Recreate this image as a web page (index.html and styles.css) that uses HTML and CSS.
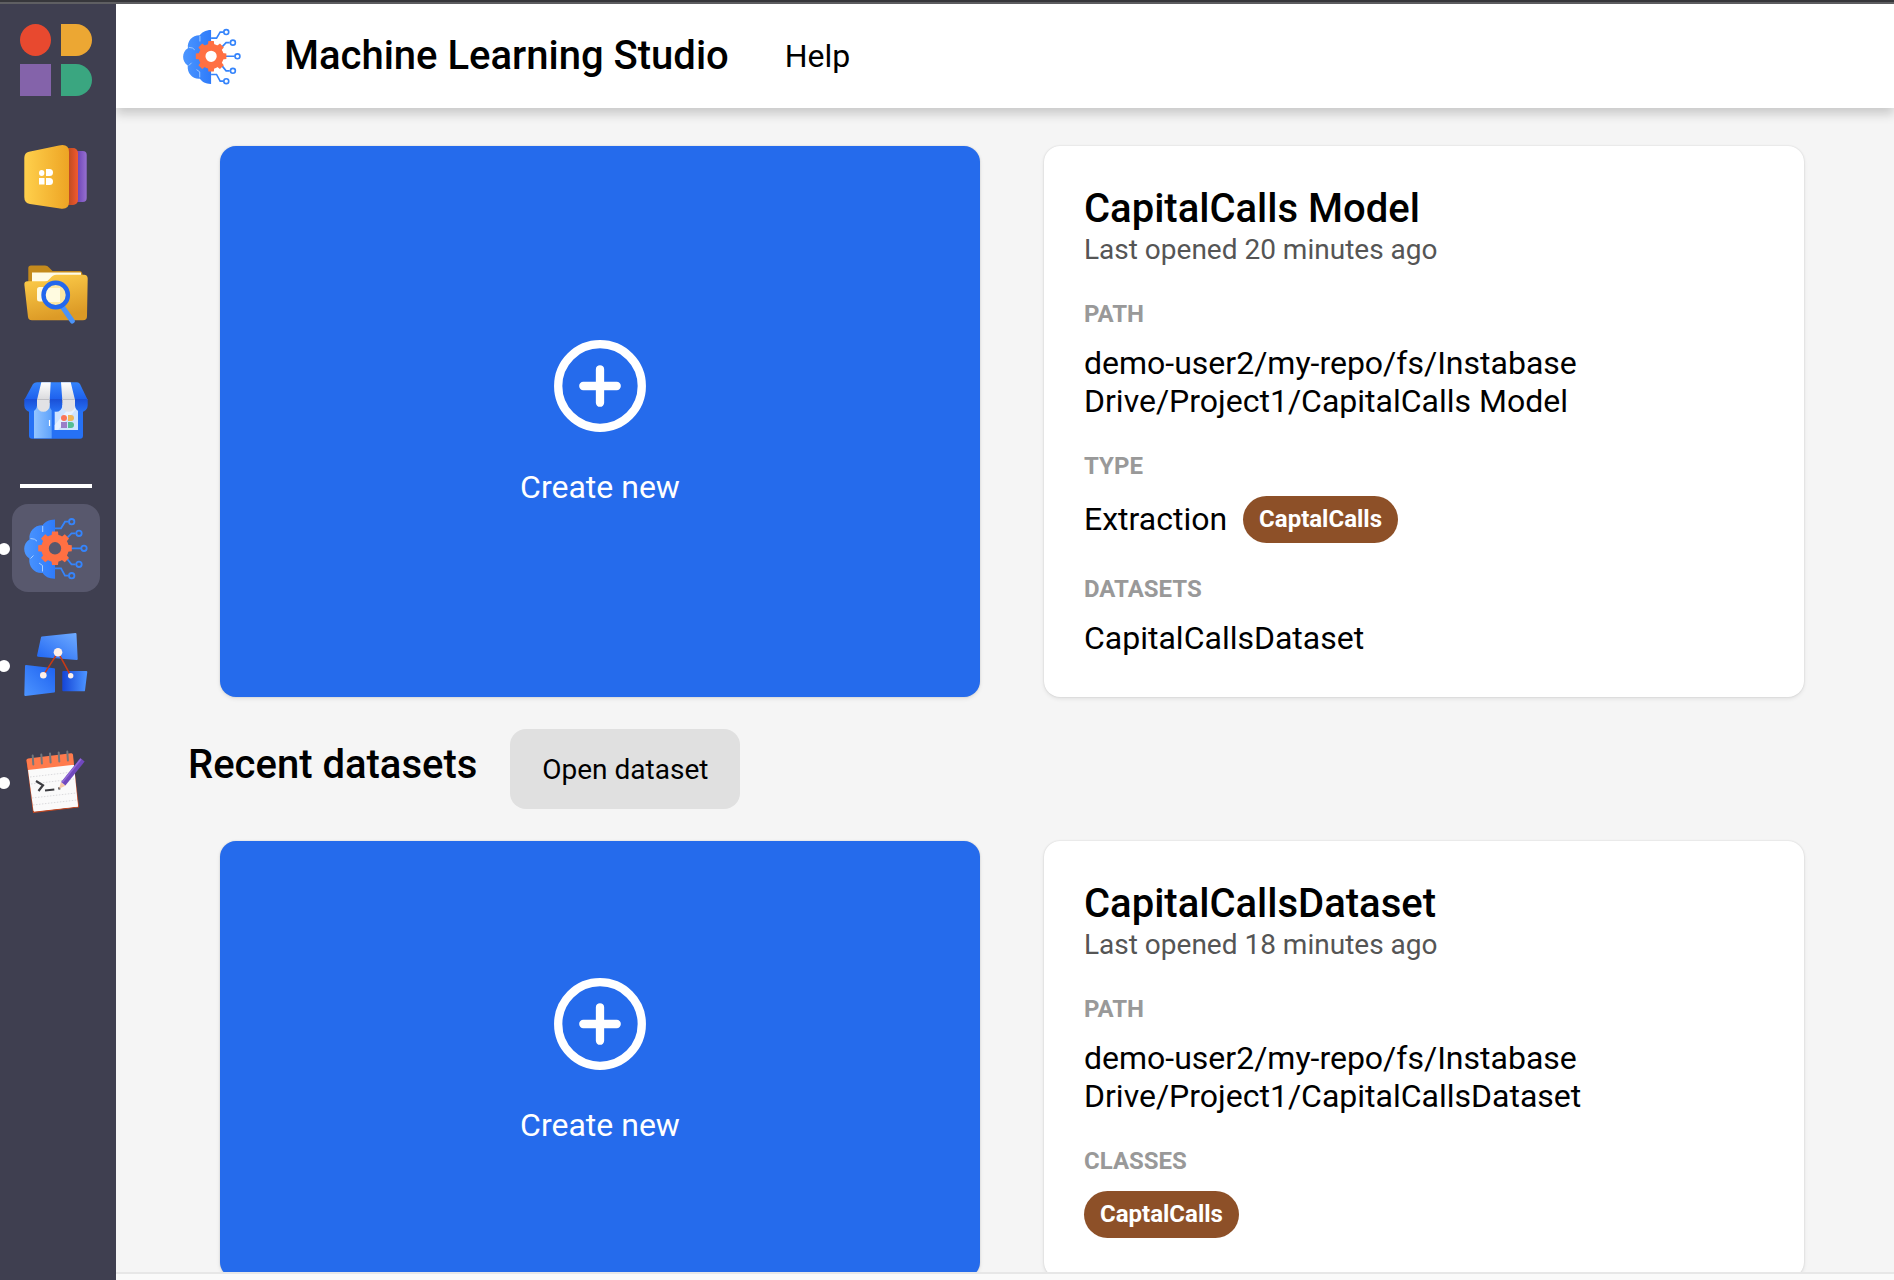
FILE: index.html
```html
<!DOCTYPE html>
<html lang="en">
<head>
<meta charset="utf-8">
<title>Machine Learning Studio</title>
<link rel="stylesheet" href="styles.css">
</head>
<body>
<svg class="defs" width="0" height="0" aria-hidden="true">
  <defs>
    <linearGradient id="gold" x1="0" x2="1"><stop offset="0" stop-color="#ffd04c"/><stop offset="1" stop-color="#eda424"/></linearGradient>
    <linearGradient id="goldDown" x1="0" y1="0" x2=".3" y2="1"><stop offset="0" stop-color="#ffd04c"/><stop offset="1" stop-color="#dc9a26"/></linearGradient>
    <linearGradient id="red" x1="0" x2="1"><stop offset=".6" stop-color="#bf4a20"/><stop offset="1" stop-color="#f05a30"/></linearGradient>
    <linearGradient id="purple" x1="0" x2="1"><stop offset=".6" stop-color="#6d43b5"/><stop offset="1" stop-color="#9670d0"/></linearGradient>
    <linearGradient id="blue" x1="0" x2="1"><stop offset="0" stop-color="#4c96ff"/><stop offset="1" stop-color="#2f7bfa"/></linearGradient>
    <linearGradient id="blueUp" x1="1" y1="0" x2="0" y2="1"><stop offset="0" stop-color="#6eaaff"/><stop offset="1" stop-color="#2167f3"/></linearGradient>
    <linearGradient id="blueLeft" x1="0" y1="1" x2="1" y2="0"><stop offset="0" stop-color="#4b93ff"/><stop offset="1" stop-color="#1e62f0"/></linearGradient>
    <linearGradient id="blueRight" x1="0" x2="1"><stop offset="0" stop-color="#1748d8"/><stop offset="1" stop-color="#4b93ff"/></linearGradient>
    <linearGradient id="roof" x1="0" y1="0" x2="0" y2="1"><stop offset="0" stop-color="#3584fb"/><stop offset="1" stop-color="#1d5fed"/></linearGradient>
    <linearGradient id="scallop" x1="0" y1="0" x2="0" y2="1"><stop offset="0" stop-color="#1a4fd6"/><stop offset="1" stop-color="#2671f5"/></linearGradient>
    <linearGradient id="cloth" x1="0" y1="0" x2="0" y2="1"><stop offset="0" stop-color="#fff"/><stop offset="1" stop-color="#d9d9dc"/></linearGradient>
    <linearGradient id="door" x1="0" x2="1"><stop offset="0" stop-color="#94c5ff"/><stop offset="1" stop-color="#5ea2fb"/></linearGradient>
    <mask id="gearCut"><rect width="88" height="88" fill="#fff"/><circle cx="43" cy="44.3" r="10" fill="#000"/></mask>
    <symbol id="ml" viewBox="0 0 88 88">
      <g mask="url(#gearCut)">
        <path fill="url(#blue)" d="M43 15.500C37 15.500 32 18.500 30.700 21.300C22.500 21 16.500 27.500 17.500 35.500C10.500 39.500 10.500 50 17.300 54.500C16.500 63 22.500 69.700 30.700 69C33 72.500 37 74.800 43 74.700Z"/>
      </g>
      <g fill="none" stroke="#a9ceff" stroke-width="1"><path d="M30.700 22v6M18.500 34.500l4 .7 2.500 2M18.500 54.500l3-3M27 59l3.500 2.500v6"/></g>
      <g fill="none" stroke="#3584fb" stroke-width="1.800">
        <path d="M43 24.300h6l4-6.600h3.500M54 35l5.500-5.700h4M59 44.300h10M54 53.500l5.500 6.800h4M43 64.300h6l4 7.400h3.500"/>
        <circle cx="59.700" cy="17.700" r="2.700"/><circle cx="67" cy="29.300" r="2.700"/><circle cx="72" cy="44.300" r="2.700"/><circle cx="67" cy="60.300" r="2.700"/><circle cx="59.700" cy="71.700" r="2.700"/>
      </g>
      <g fill="#ff7043">
        <circle cx="43" cy="44.300" r="10" fill="none" stroke="#ff7043" stroke-width="7.600"/>
        <g id="teeth"><path d="M39.500 32l.5-4.500h6l.5 4.500zM39.500 56.600l.5 4.500h6l.5-4.500zM30.700 40.800l-4.500.5v6l4.500.5zM55.300 40.800l4.500.5v6l-4.500.5z"/></g>
        <use href="#teeth" transform="rotate(45 43 44.300)"/>
      </g>
    </symbol>
    <symbol id="plus" viewBox="0 0 100 100">
      <g fill="none" stroke="#fff" stroke-width="8.300"><circle cx="50" cy="50" r="41.800"/><path stroke-linecap="round" d="M50 33.300v33.400M33.300 50h33.400"/></g>
    </symbol>
  </defs>
</svg>
<div class="topline"></div>
<div class="app">
  <nav class="sidebar">
    <svg class="brand" viewBox="0 0 72 72">
      <ellipse cx="15.500" cy="16" rx="15.500" ry="16" fill="#e8492f"/>
      <path d="M41 0h15a16 16 0 0 1 0 32H41z" fill="#eca733"/>
      <path d="M0 40h31v32H0z" fill="#8463aa"/>
      <path d="M41 40h15a16 16 0 0 1 0 32H41z" fill="#3aa680"/>
    </svg>
    <a class="tile"><svg viewBox="0 0 88 88">
      <rect x="50" y="18" width="24.700" height="51" rx="4" fill="url(#purple)"/>
      <rect x="42" y="15" width="24" height="57" rx="5" fill="url(#red)"/>
      <path fill="url(#gold)" d="M17 18.700L47 12.500Q57 10.500 57 19V69Q57 77 48 75.500L18 71Q12.300 70 12.300 64V25Q12.300 19.800 17 18.700Z"/>
      <g fill="#fff"><ellipse cx="29.700" cy="40" rx="2.700" ry="3"/><path d="M34 36h3.500a3.500 3.500 0 0 1 0 7H34zM27 45h5.500v6.500H27zM34 45h3.500a3.500 3.500 0 0 1 0 7H34z"/></g>
    </svg></a>
    <a class="tile"><svg viewBox="0 0 88 88">
      <path fill="#c48a1c" d="M19 15.500H33Q35.500 15.500 37 17.500L40.500 21H68Q70.500 21.500 70.500 25V50H16.300V18Q16.300 15.500 19 15.500Z"/>
      <path fill="#fffbe6" d="M20 22.500H69V40H20Z"/>
      <path fill="url(#goldDown)" d="M15.500 31.300H33Q36 31.300 38 28.500Q40.500 24.700 44.500 24.700H72Q75.700 24.700 75.700 28.500L75 66Q75 70.300 71 70.300H20Q16.500 70.300 16 67L12.400 35Q12 31.300 15.500 31.300Z"/>
      <rect x="25" y="37" width="23" height="14.500" rx="2.500" fill="#fffbe0"/>
      <circle cx="43.700" cy="45" r="12" fill="#fce9a6"/><path d="M34 38h14v14H34z" fill="#fffbe0"/>
      <path d="M50.500 57L60.300 71" stroke="#4b93f8" stroke-width="5" stroke-linecap="round"/>
      <circle cx="43.700" cy="45" r="12.200" fill="none" stroke="#2368ee" stroke-width="4.400"/>
    </svg></a>
    <a class="tile"><svg viewBox="0 0 88 88">
      <path fill="#2671f5" d="M17 36H71V68.500Q71 71.700 68 71.700H20Q17 71.700 17 68.500Z"/>
      <path fill="url(#door)" d="M22 36H39.700V71.300H22Z"/><path d="M37.500 53v6" stroke="#fff" stroke-width="1.200"/>
      <path fill="#cfe4ff" d="M42.700 38H66V63H42.700Z"/><path fill="#e8f2ff" d="M42.700 58L58 40H66L46 63H42.700Z"/>
      <circle cx="52" cy="51" r="3" fill="#fa7558"/><path d="M56 48h3a3 3 0 0 1 0 6h-3z" fill="#efb65a"/><path d="M49 55h6v6h-6z" fill="#9a7fc8"/><path d="M56 55h3a3 3 0 0 1 0 6h-3z" fill="#55bd94"/>
      <path fill="url(#roof)" d="M25 15.300H65Q67 15.300 68 17L75.700 33H12.300L21 17Q22.500 15.300 25 15.300Z"/>
      <path fill="url(#cloth)" d="M29.300 15.300H38.700L37.700 33H25ZM49 15.300H58.700L63 33H50.300Z"/>
      <path fill="url(#scallop)" d="M12.300 32H25V38.500a6.350 6.350 0 0 1-12.700 0ZM37.700 32H50.300V38.500a6.300 6.300 0 0 1-12.600 0ZM63 32H75.700V38.500a6.350 6.350 0 0 1-12.700 0Z"/>
      <path fill="#e2e2e5" d="M25 32H37.700V38.500a6.350 6.350 0 0 1-12.700 0ZM50.300 32H63V38.500a6.350 6.350 0 0 1-12.700 0Z"/>
      <path d="M25 32.500h12.700M50.300 32.500h12.700" stroke="#bfbfc4"/>
    </svg></a>
    <div class="divider"></div>
    <a class="tile tile--active tile--running"><svg><use href="#ml"/></svg></a>
    <a class="tile tile--running"><svg viewBox="0 0 88 88">
      <g stroke-width="2" stroke-linejoin="round">
      <path fill="url(#blueUp)" stroke="url(#blueUp)" d="M30 16.500L63.500 13L64.700 38L26 34.700Z"/>
      <path fill="url(#blueLeft)" stroke="url(#blueLeft)" d="M14 45L42 48.300V70.500L13.300 74Z"/>
      <path fill="url(#blueRight)" stroke="url(#blueRight)" d="M51.300 51H74.300L72 69.300H51.300Z"/></g>
      <path d="M31.300 54.300L46 31.300L58.700 54.700" fill="none" stroke="#c93a15" stroke-width="1.500"/>
      <g fill="#fff0e8"><circle cx="46" cy="31.300" r="4.300"/><circle cx="31.300" cy="54.300" r="3.300"/><circle cx="58.700" cy="54.700" r="2.700"/></g>
    </svg></a>
    <a class="tile tile--running"><svg viewBox="0 0 88 88">
      <path d="M15 22L60 16.500L66.500 69L21.500 74.300Z" fill="#fff" stroke="#bd4520" stroke-width="1.200" stroke-linejoin="round"/>
      <path d="M16 32L62 26.700L66 68.500L21.500 73Z" fill="#fafafa"/>
      <path d="M14.500 22.500Q14.300 21 16 20.500L59 15.300Q60.700 15 61 16.800L62 26.700L16 32Z" fill="#ff7b4d"/>
      <g stroke="#d2d2d6" stroke-width=".8" stroke-dasharray="1.500 1.500"><path d="M18 39l43-5M19 46l43-5M20 60l44-5M21 67l44-5"/></g>
      <path d="M20.700 17.500l.6 9M29.300 16.500l.6 9M38 15.500l.6 9M46.700 14.500l.6 9M55.300 13.500l.6 9" stroke="#73777c" stroke-width="2" stroke-linecap="round"/>
      <path d="M24 43L31 47.300L26.500 53M33 52.500l9.300-1M46.300 50.300h2" fill="none" stroke="#3c3c40" stroke-width="2.200"/>
      <path d="M47 50.700L49 44L53.500 47.700Z" fill="#f7c9a8"/>
      <path d="M51.300 45.800L70.500 21.800" stroke="#7048bd" stroke-width="5.500"/><path d="M50.300 44.200L69 21" stroke="#9269d8" stroke-width="1.500"/>
    </svg></a>
  </nav>
  <div class="main">
    <header class="header">
      <svg class="header-logo"><use href="#ml"/></svg>
      <h1 class="header-title">Machine Learning Studio</h1>
      <a class="header-link">Help</a>
    </header>
    <main class="content">
      <section class="grid">
        <a class="card card--create"><svg class="plus"><use href="#plus"/></svg><span>Create new</span></a>
        <article class="card">
          <h2 class="card-title">CapitalCalls Model</h2>
          <p class="card-sub">Last opened 20 minutes ago</p>
          <h3 class="label">PATH</h3>
          <p class="value">demo-user2/my-repo/fs/Instabase<br>Drive/Project1/CapitalCalls Model</p>
          <h3 class="label">TYPE</h3>
          <div class="value tags"><span class="tags-text">Extraction</span><span class="tag">CaptalCalls</span></div>
          <h3 class="label">DATASETS</h3>
          <p class="value">CapitalCallsDataset</p>
        </article>
      </section>
      <div class="section-head">
        <h2 class="section-title">Recent datasets</h2>
        <button class="button">Open dataset</button>
      </div>
      <section class="grid">
        <a class="card card--create"><svg class="plus"><use href="#plus"/></svg><span>Create new</span></a>
        <article class="card">
          <h2 class="card-title">CapitalCallsDataset</h2>
          <p class="card-sub">Last opened 18 minutes ago</p>
          <h3 class="label">PATH</h3>
          <p class="value">demo-user2/my-repo/fs/Instabase<br>Drive/Project1/CapitalCallsDataset</p>
          <h3 class="label">CLASSES</h3>
          <div class="value tags"><span class="tag">CaptalCalls</span></div>
        </article>
      </section>
    </main>
    <footer class="footer"></footer>
  </div>
</div>
</body>
</html>
```
FILE: styles.css
```css
* { box-sizing: border-box; margin: 0; padding: 0; }
body {
  display: flex;
  flex-direction: column;
  height: 1280px;
  overflow: hidden;
  font-family: Roboto, "Liberation Sans", sans-serif;
  color: #000;
  background: #f5f5f5;
}
.defs { position: absolute; }
.topline { flex: none; height: 4px; background: #37373b; border-bottom: 2px solid #5f5f62; }
.app { flex: 1; display: flex; min-height: 0; }

.sidebar {
  flex: none;
  width: 116px;
  padding: 20px 0 0 12px;
  display: flex;
  flex-direction: column;
  gap: 29px;
  background: #3f3f50;
  z-index: 2;
}
.brand { flex: none; width: 72px; height: 72px; margin: 0 0 8px 8px; }
.tile { flex: none; position: relative; width: 88px; height: 88px; border-radius: 16px; }
.tile svg { display: block; width: 88px; height: 88px; }
.tile--active { background: #58586d; }
.tile--running::before {
  content: "";
  position: absolute;
  left: -14px;
  top: 39px;
  width: 12px;
  height: 12px;
  border-radius: 50%;
  background: #fff;
}
.divider { flex: none; width: 72px; height: 4px; margin: 0 0 -13px 8px; background: #fff; }

.main { flex: 1; display: flex; flex-direction: column; min-width: 0; }
.header {
  flex: none;
  height: 104px;
  padding-left: 56px;
  display: flex;
  align-items: center;
  background: #fff;
  box-shadow: 0 6px 10px rgba(0, 0, 0, .18);
  z-index: 1;
}
.header-logo { width: 80px; height: 80px; }
.header-title { margin-left: 32px; font-size: 40px; font-weight: 500; line-height: 48px; }
.header-link { margin-left: 56px; font-size: 32px; line-height: 38px; }

.content { flex: 1; min-height: 0; overflow: hidden; padding: 38px 90px 0 72px; }
.grid { display: grid; grid-template-columns: 1fr 1fr; gap: 64px; padding-left: 32px; }
.card {
  padding: 40px;
  border-radius: 16px;
  background: #fff;
  box-shadow: 0 0 2px rgba(0, 0, 0, .14), 0 2px 4px rgba(0, 0, 0, .08);
}
.card--create {
  display: flex;
  flex-direction: column;
  align-items: center;
  justify-content: center;
  gap: 32px;
  padding-bottom: 41px;
  color: #fff;
  background: #256bec;
  font-size: 32px;
  line-height: 38px;
}
.plus { width: 100px; height: 100px; }
.card-title { font-size: 40px; font-weight: 500; line-height: 45px; }
.card-sub { font-size: 28px; line-height: 37px; color: #555; }
.label { margin: 32px 0 16px; font-size: 24px; font-weight: 700; line-height: 28px; color: #999; }
.value { font-size: 32px; line-height: 38px; }
.tags { display: flex; align-items: center; gap: 16px; }
.tags-text { padding-bottom: 1px; }
.tag {
  height: 47px;
  padding: 0 16px;
  border-radius: 24px;
  font-size: 24px;
  font-weight: 700;
  line-height: 46px;
  color: #fff;
  background: #8d5028;
}
.section-head { display: flex; align-items: center; gap: 33px; padding: 32px 0; }
.section-title { font-size: 40px; font-weight: 500; line-height: 48px; margin-top: -8px; }
.button {
  width: 230px;
  height: 80px;
  border: 0;
  border-radius: 16px;
  font: 400 28px/33px Roboto, "Liberation Sans", sans-serif;
  color: #000;
  background: #e0e0e0;
}
.footer { flex: none; height: 8px; border-top: 2px solid #e7e7e7; background: #fafafa; }
```
